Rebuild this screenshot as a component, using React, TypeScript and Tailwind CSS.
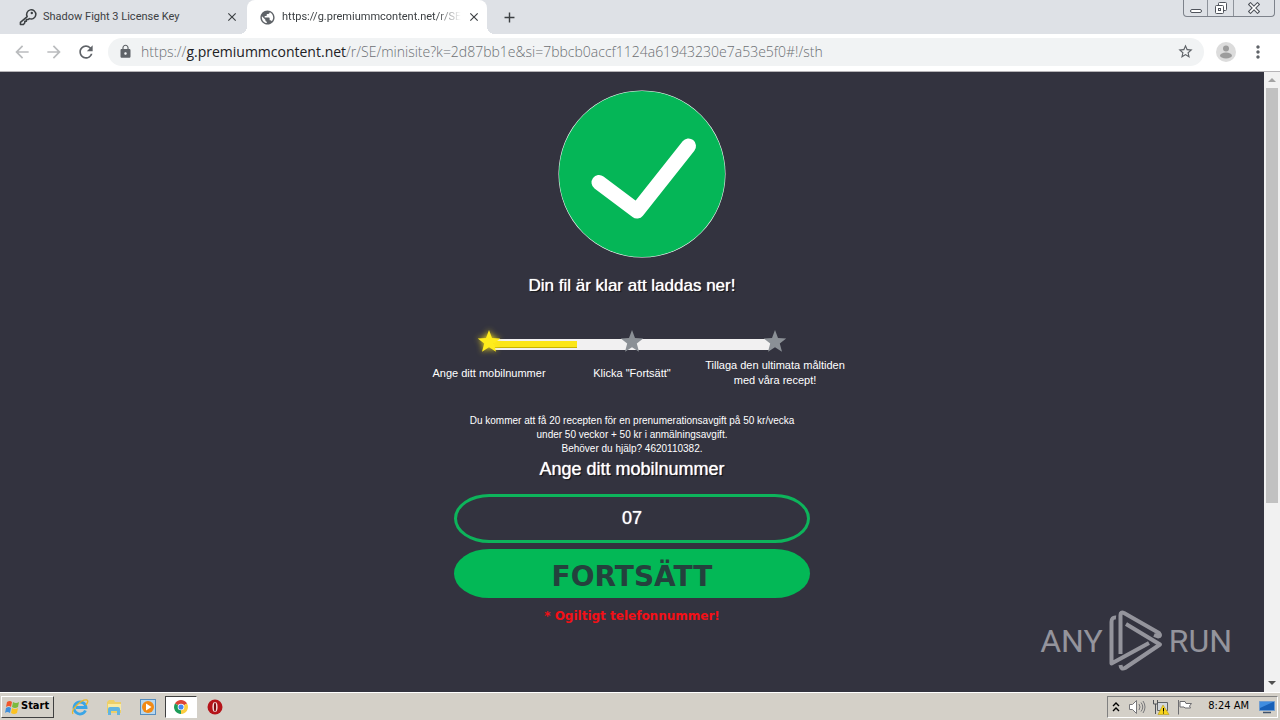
import React from "react";
import {
  MdAdd,
  MdArrowBack,
  MdArrowForward,
  MdClose,
  MdLock,
  MdMoreVert,
  MdPublic,
  MdRefresh,
  MdStarBorder,
} from "react-icons/md";

const steps = [
  { label: "Ange ditt mobilnummer", active: true },
  { label: 'Klicka "Fortsätt"', active: false },
  { label: "Tillaga den ultimata måltiden med våra recept!", active: false },
];

const KeyIcon = () => (
  <svg viewBox="0 0 18 18" className="size-[18px] shrink-0" fill="none" stroke="#3c4043" strokeWidth="1.5" strokeLinejoin="round">
    <path d="M8.2 8.6A4.6 4.6 0 1 1 10.4 10.6L9 11.6H7.4V13.2H5.8V14.8L4.4 16.6H1.4V14.4Z" />
    <circle cx="12.8" cy="5" r="1.2" fill="#3c4043" stroke="none" />
  </svg>
);

const Star = ({ active }: { active: boolean }) => (
  <svg
    viewBox="0 0 24 24"
    className={active ? "size-6 drop-shadow-[0_0_3px_#ffe81a]" : "size-6"}
    fill={active ? "#ffec1c" : "#8b9096"}
  >
    <path d="M12 0l3 8 8.200.4-6.400 5.100 2.200 8.200L12 17.200l-7 4.500 2.200-8.200L.8 8.400 9 8z" />
  </svg>
);

const AnyRunLogo = () => (
  <svg viewBox="0 0 54 62" className="h-[62px] w-[54px]" fill="none" stroke="currentColor" strokeWidth="4" strokeLinejoin="round">
    <path d="M7 7.5Q2.500 7 2.500 12V53.500L40 33" />
    <path d="M11.500 44V5Q11.500 1.500 15 3L50 23Q52.500 26 49 26.500L45 25" />
    <path d="M17 14L51 34.500L16 58Q12 60 11.500 55" />
  </svg>
);

const TabStrip = () => (
  <div className="flex h-[34px] items-stretch bg-[#dee1e6] font-['Roboto',sans-serif] text-[11px] text-[#3c4043]">
    <div className="flex w-[247px] items-center pr-2 pl-[19px]">
      <KeyIcon />
      <span className="ml-1.5 flex-1 whitespace-nowrap">Shadow Fight 3 License Key</span>
      <button aria-label="Close tab"><MdClose size={14} /></button>
    </div>
    <div className="relative flex w-60 items-center rounded-t-lg bg-white pr-[9px] pl-3">
      <span className="absolute bottom-0 -left-2 size-2 bg-[radial-gradient(circle_at_0_0,transparent_8px,white_8px)]" />
      <span className="absolute -right-2 bottom-0 size-2 bg-[radial-gradient(circle_at_100%_0,transparent_8px,white_8px)]" />
      <MdPublic size={17} className="shrink-0 text-[#5f6368]" />
      <span className="ml-1.5 flex-1 [mask-image:linear-gradient(to_right,black_86%,transparent)] whitespace-nowrap">
        https://g.premiummcontent.net/r/SE
      </span>
      <button aria-label="Close tab" className="ml-1.5"><MdClose size={14} /></button>
    </div>
    <button aria-label="New tab" className="ml-3.5"><MdAdd size={17} /></button>
    <div className="mr-[5px] ml-auto flex h-[17px] overflow-hidden rounded-b border border-t-0 border-[#7d828b]">
      <button aria-label="Minimize" className="flex w-6 items-end justify-center border-r border-[#8e939b] pb-[3px]">
        <span className="h-1 w-3 rounded-xs border border-[#50545c] bg-white" />
      </button>
      <button aria-label="Restore" className="flex w-[26px] items-center justify-center border-r border-[#8e939b]">
        <svg viewBox="0 0 14 14" className="size-3.5" fill="#fff" stroke="#50545c">
          <rect x="4.5" y="1.5" width="8" height="8" rx="1" />
          <rect x="1.5" y="4.5" width="8" height="8" rx="1" />
          <rect x="4.5" y="7.5" width="2" height="2" />
        </svg>
      </button>
      <button aria-label="Close window" className="flex w-10 items-center justify-center">
        <svg viewBox="0 0 12 12" className="size-3" strokeLinecap="square">
          <path d="M2.5 2.5l7 7M9.5 2.5l-7 7" stroke="#50545c" strokeWidth="3.8" />
          <path d="M2.5 2.5l7 7M9.5 2.5l-7 7" stroke="#fff" strokeWidth="1.6" />
        </svg>
      </button>
    </div>
  </div>
);

const Toolbar = () => (
  <div className="flex h-[38px] items-center border-b border-[#b6b4b7] bg-white pb-0.5 text-[#5f6368]">
    <div className="flex w-[108px] items-center gap-3 pl-3">
      <button aria-label="Back" className="text-[#babcbe]"><MdArrowBack size={20} /></button>
      <button aria-label="Forward" className="text-[#babcbe]"><MdArrowForward size={20} /></button>
      <button aria-label="Reload"><MdRefresh size={20} /></button>
    </div>
    <div className="flex h-7 flex-1 items-center rounded-full bg-[#f1f3f4] px-2.5">
      <MdLock size={15} />
      <span className="ml-2 flex-1 font-['Open_Sans',sans-serif] text-sm font-light whitespace-nowrap text-[#6b6f73]">
        https://<span className="font-normal text-[#202124]">g.premiummcontent.net</span>
        /r/SE/minisite?k=2d87bb1e&amp;si=7bbcb0accf1124a61943230e7a53e5f0#!/sth
      </span>
      <button aria-label="Bookmark"><MdStarBorder size={17} /></button>
    </div>
    <button aria-label="Profile" className="ml-3">
      <svg viewBox="0 0 20 20" className="size-5">
        <circle cx="10" cy="10" r="10" fill="#dcdcdc" />
        <circle cx="10" cy="6.5" r="3" fill="#9c9c9c" />
        <ellipse cx="10" cy="13.5" rx="6" ry="3" fill="#9c9c9c" />
      </svg>
    </button>
    <button aria-label="Menu" className="mx-3"><MdMoreVert size={20} /></button>
  </div>
);

const Steps = () => (
  <ol className="relative mt-8 grid w-[429px] grid-cols-3 text-center text-[11px] leading-[15px]">
    <li aria-hidden="true" className="absolute top-[9px] right-[76px] left-[76px] h-[11px] bg-[#f1f0f1]">
      <div className="mt-0.5 h-[7px] w-[30%] border-b border-[#c9b400] bg-[#fbe618]" />
    </li>
    {steps.map((step) => (
      <li key={step.label} className="relative flex flex-col items-center">
        <Star active={step.active} />
        <span className="mt-1 flex h-[30px] items-center">{step.label}</span>
      </li>
    ))}
  </ol>
);

const Page = () => (
  <main className="relative flex flex-1 flex-col items-center overflow-hidden bg-[#33333f] font-['Liberation_Sans',sans-serif] text-white">
    <svg viewBox="0 0 168 168" className="mt-[18px] ml-5 size-[168px] shrink-0">
      <circle cx="84" cy="84" r="83.5" fill="#fff" />
      <circle cx="84" cy="84" r="83" fill="#05b657" />
      <path d="M41 92.5L79 121L130.5 56" fill="none" stroke="#fff" strokeWidth="15" strokeLinecap="round" strokeLinejoin="round" />
    </svg>
    <h1 className="mt-4 text-[17px] leading-6 [text-shadow:0_0_1px_#fff,1px_1px_1px_#000]">Din fil är klar att laddas ner!</h1>
    <Steps />
    <p className="mt-[26px] text-center text-[10px] leading-[14px]">
      Du kommer att få 20 recepten för en prenumerationsavgift på 50 kr/vecka
      <br />
      under 50 veckor + 50 kr i anmälningsavgift.
      <br />
      Behöver du hjälp? 4620110382.
    </p>
    <form className="flex w-[356px] flex-col items-center">
      <label htmlFor="phone" className="text-lg leading-[26px] [text-shadow:0_0_1px_#fff,1px_1px_1px_#000]">Ange ditt mobilnummer</label>
      <input
        id="phone"
        type="tel"
        defaultValue="07"
        className="mt-3 h-[49px] w-full rounded-[36px/25px] border-3 border-[#0db45b] bg-transparent text-center text-lg [text-shadow:0_0_1px_#fff]"
      />
      <button
        type="button"
        className="mt-1.5 h-[49px] w-full rounded-[36px/25px] bg-[#03b856] pt-1.5 font-['DejaVu_Sans',sans-serif] text-[28px] leading-10 font-bold text-[#24413d]"
      >
        FORTSÄTT
      </button>
      <p role="alert" className="mt-2 font-['DejaVu_Sans',sans-serif] text-xs leading-5 font-bold text-[#f40f16]">* Ogiltigt telefonnummer!</p>
    </form>
    <div className="absolute right-8 bottom-5 flex items-center gap-1.5 font-['Roboto',sans-serif] text-[32px] text-[#94949c]">
      <span>ANY</span>
      <AnyRunLogo />
      <span>RUN</span>
    </div>
  </main>
);

const Scrollbar = () => (
  <div className="flex w-4 flex-col items-center bg-[#f1f1f1]">
    <svg viewBox="0 0 16 16" className="size-4"><path d="M4 10h8L8 6z" fill="#a3a3a3" /></svg>
    <div className="h-[415px] w-3 bg-[#c1c1c1]" />
    <svg viewBox="0 0 16 16" className="mt-auto size-4"><path d="M4 5h8L8 9z" fill="#505050" /></svg>
  </div>
);

const Taskbar = () => (
  <footer className="flex h-7 items-center border-t border-white bg-[#d4d0c8] pr-0.5 pl-px font-['DejaVu_Sans_Condensed','DejaVu_Sans',sans-serif] text-[11px] text-black">
    <button className="flex h-[22px] w-[53px] items-center gap-px border border-t-white border-r-[#404040] border-b-[#404040] border-l-white pl-0.5 font-bold">
      <svg viewBox="0 0 16 16" className="size-4 shrink-0">
        <path d="M3 3q3-2 5 0L7 8Q5 6 2 8z" fill="#f0562b" />
        <path d="M9 3q3 2 6 0l-1 5q-3 2-6 0z" fill="#7cba3d" />
        <path d="M2 9q3-2 5 0l-1 5q-3-2-5 0z" fill="#3f8fdc" />
        <path d="M8 9q3 2 6 0l-1 5q-3 2-6 0z" fill="#fcc221" />
      </svg>
      Start
    </button>
    <button aria-label="Internet Explorer" className="ml-[17px]">
      <svg viewBox="0 0 18 18" className="size-[18px]" fill="none">
        <path d="M14.5 12.5A6 6 0 1 1 15 9.5H5" stroke="#3aa5e6" strokeWidth="2.8" />
        <path d="M2 16Q0 13 6 7T16 2q2 1-1 5" stroke="#eab72c" strokeWidth="1.3" />
      </svg>
    </button>
    <button aria-label="Explorer" className="ml-4">
      <svg viewBox="0 0 18 18" className="size-[18px]">
        <path d="M2 4l2-2h5l1 2h6v11H2z" fill="#edcf68" />
        <path d="M3 6h13v6H3z" fill="#f9eaa2" />
        <path d="M3 17v-6q0-2 2-2h8q2 0 2 2v6h-3v-4H6v4z" fill="#62b4e0" />
      </svg>
    </button>
    <button aria-label="Media Player" className="ml-4">
      <svg viewBox="0 0 18 18" className="size-[18px]">
        <rect x="1.5" y="1.5" width="15" height="15" fill="#b7d7ef" stroke="#568ec0" />
        <circle cx="9" cy="9" r="6" fill="#f28a15" />
        <path d="M7 5.5v7L12.5 9z" fill="#fff" />
      </svg>
    </button>
    <button aria-label="Chrome" className="ml-2 flex h-[22px] w-8 items-center justify-center border border-t-[#404040] border-r-white border-b-white border-l-[#404040] bg-white">
      <svg viewBox="0 0 16 16" className="size-3.5">
        <path d="M8 8L1.1 4A8 8 0 0 1 14.9 4z" fill="#dc4437" />
        <path d="M8 8L14.9 4A8 8 0 0 1 8 16z" fill="#fccd3f" />
        <path d="M8 8V16A8 8 0 0 1 1.1 4z" fill="#1c9c58" />
        <circle cx="8" cy="8" r="3.8" fill="#fff" />
        <circle cx="8" cy="8" r="2.9" fill="#4587f3" />
      </svg>
    </button>
    <button aria-label="Opera" className="ml-2.5">
      <svg viewBox="0 0 16 16" className="size-4">
        <circle cx="8" cy="8" r="7.5" fill="#b5141a" />
        <ellipse cx="8" cy="8" rx="2.6" ry="5" fill="#f4dcdc" />
        <ellipse cx="8" cy="8" rx="1.1" ry="4.6" fill="#7d0c10" />
      </svg>
    </button>
    <div className="ml-auto flex h-[22px] items-center border border-t-[#808080] border-r-white border-b-white border-l-[#808080] pr-0.5 pl-1">
      <svg viewBox="0 0 8 12" className="h-3 w-2" fill="none" stroke="#000" strokeWidth="1.4">
        <path d="M1 5l3-3 3 3M1 10l3-3 3 3" />
      </svg>
      <svg viewBox="0 0 18 16" className="ml-2 h-4 w-[18px]" fill="#fff" stroke="#77777a">
        <path d="M1.5 5.5h3l4-4v13l-4-4h-3z" />
        <path d="M11 5q2 3 0 6M13 3.5q3.5 4.5 0 9M15 2q4 6 0 12" fill="none" />
      </svg>
      <svg viewBox="0 0 18 16" className="ml-1.5 h-4 w-[18px]">
        <path d="M5.5 3.5h10v8h-10z" fill="#d4d8dc" stroke="#606468" />
        <path d="M1.5 1v4h4V1M3.5 5v10" fill="none" stroke="#505458" />
        <path d="M11 6l6 9.5H6z" fill="#f7d41c" stroke="#b39818" strokeWidth=".6" />
        <path d="M11.5 9v3.5M11.5 13.5v1" stroke="#000" />
      </svg>
      <svg viewBox="0 0 18 16" className="ml-1.5 h-4 w-[18px]" fill="#fff" stroke="#6d6d70">
        <path d="M2.5 1v14.5M4 2.5h5l1 2h5.5l-2 2.5 1 2H9l-1-1H4z" />
      </svg>
      <time className="mr-2.5 ml-3.5">8:24 AM</time>
      <svg viewBox="0 0 16 14" className="h-3.5 w-4">
        <path d="M.5 1.5h15v9H.5z" fill="#1760b8" stroke="#6f9cd0" />
        <path d="M1 2h13L1 8z" fill="#3f8de0" />
        <path d="M4 12.5h8" stroke="#40536c" strokeWidth="1.5" />
      </svg>
    </div>
  </footer>
);

const App = () => {
  return (
    <div className="flex h-screen flex-col overflow-hidden">
      <TabStrip />
      <Toolbar />
      <div className="flex min-h-0 flex-1">
        <Page />
        <Scrollbar />
      </div>
      <Taskbar />
    </div>
  );
};

export default App;
